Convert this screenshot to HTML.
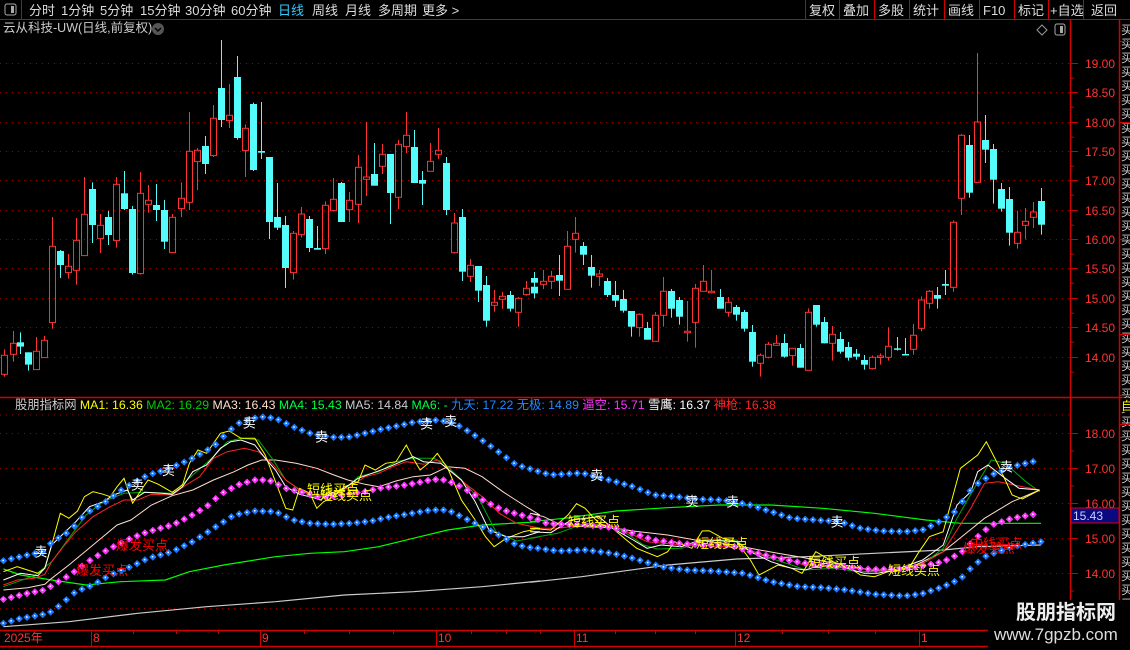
<!DOCTYPE html>
<html><head><meta charset="utf-8"><style>
html,body{margin:0;padding:0;background:#000;width:1130px;height:650px;overflow:hidden;font-family:"Liberation Sans","Noto Sans CJK SC",sans-serif}
#c{position:absolute;left:0;top:0}
.t{position:absolute;white-space:nowrap;font-size:13px;line-height:15px}
</style></head><body>
<svg id="c" width="1130" height="650" xmlns="http://www.w3.org/2000/svg"></svg>
<div class="t" style="left:3px;top:21px;color:#ccc;font-size:12.5px">云从科技-UW(日线,前复权)</div>
<div class="t" style="left:15px;top:398px;font-size:12.3px;color:#ccc">股朋指标网 <span style="color:#ff0">MA1: 16.36</span> <span style="color:#0c0">MA2: 16.29</span> <span style="color:#fdc">MA3: 16.43</span> <span style="color:#0f4">MA4: 15.43</span> <span style="color:#ccc">MA5: 14.84</span> <span style="color:#0f4">MA6: -</span> <span style="color:#28f">九天: 17.22</span> <span style="color:#28f">无极: 14.89</span> <span style="color:#f3f">逼空: 15.71</span> <span style="color:#fff">雪鹰: 16.37</span> <span style="color:#f22">神枪: 16.38</span></div>
<div style="position:absolute;left:988px;top:600px;width:142px;height:50px;background:#000"></div>
<div class="t" style="left:1016px;top:602px;font-size:20px;line-height:22px;color:#eee;font-weight:bold">股朋指标网</div>
<div class="t" style="left:994px;top:625px;font-size:17px;line-height:20px;color:#ddd">www.7gpzb.com</div>
<script>
var s=document.getElementById('c'),h='';
function L(x1,y1,x2,y2,c,w,d){h+='<line x1="'+x1+'" y1="'+y1+'" x2="'+x2+'" y2="'+y2+'" stroke="'+c+'" stroke-width="'+(w||1)+'"'+(d?' stroke-dasharray="'+d+'"':'')+'/>';}
function T(x,y,t,c,fs,a){h+='<text x="'+x+'" y="'+y+'" fill="'+c+'" font-size="'+(fs||13)+'" font-family="Liberation Sans,Noto Sans CJK SC,sans-serif"'+(a?' '+a:'')+'>'+t+'</text>';}
var R='#d00000';
// toolbar
L(0,19.5,1130,19.5,R);L(21.5,0,21.5,19,R);
h+='<rect x="5" y="4" width="11" height="11" rx="2" fill="none" stroke="#aaa"/><rect x="11" y="6" width="3" height="7" fill="#aaa"/>';
[[29,'分时'],[61,'1分钟'],[100,'5分钟'],[140,'15分钟'],[185,'30分钟'],[231,'60分钟'],[278,'日线'],[312,'周线'],[345,'月线'],[378,'多周期'],[422,'更多 &gt;']].forEach(function(p){T(p[0],15,p[1],p[1]=='日线'?'#3cf':'#ddd',13);});
var bx=[805,839,874,909,944,979,1014,1048,1083],bl=['复权','叠加','多股','统计','画线','F10','标记','+自选','返回'];
bx.forEach(function(x,i){L(x+.5,0,x+.5,19,R);T(x+(i==7?2:(i==8?8:4)),15,bl[i],'#ddd',13);});
h+='<circle cx="158" cy="29" r="6" fill="#555"/><path d="M155 28l3 3 3-3" stroke="#000" stroke-width="1.5" fill="none"/>';
h+='<path d="M1042 25l5 5-5 5-5-5z" fill="none" stroke="#999"/><rect x="1055" y="24" width="10" height="11" rx="2" fill="none" stroke="#aaa"/><rect x="1060" y="26" width="3" height="7" fill="#aaa"/>';
// frame
L(1070.5,19,1070.5,646,R,1.5);L(1119.5,19,1119.5,646,R,1.5);L(0,397.5,1130,397.5,R,1.5);L(0,630.5,1070,630.5,R,1.5);L(0,646.5,1130,646.5,R,1.5);
// right strip
for(var y=22;y<645;y+=14){T(1121,y+12,'买','#ccc',12);}
[41,122,239,334,395,424,437].forEach(function(y){L(1120,y+.5,1130,y+.5,R);});
h+='<rect x="1121" y="398" width="9" height="14" fill="#000"/>';T(1121,410,'自','#ff0',12);
// upper grid
var up=[[19,63],[18.5,92],[18,122],[17.5,151],[17,180],[16.5,210],[16,239],[15.5,268],[15,298],[14.5,327],[14,357]];
up.forEach(function(p){L(0,p[1]+.5,1070,p[1]+.5,'#a00000',1,'1 5');L(1070,p[1]+.5,1078,p[1]+.5,R);T(1085,p[1]+5,p[0].toFixed(2),'#f33',12);L(1070,p[1]+15.2,1074,p[1]+15.2,R);});
var lo=[[18,433],[17,468],[16,503],[15,538],[14,573]];
lo.forEach(function(p){L(0,p[1]+.5,1070,p[1]+.5,'#a00000',1,'1 5');L(1070,p[1]+.5,1078,p[1]+.5,R);T(1085,p[1]+5,p[0].toFixed(2),'#f33',12);L(1070,p[1]+18,1074,p[1]+18,R);});
L(0,415,1070,415,'#a00000',1,'1 5');L(0,608.5,1070,608.5,'#a00000',1,'1 5');
// candles
var A=[[13,1,946,1003,928,1010],[37,1,910,943,873,965],[60,0,907,920,877,942],[84,0,937,974,937,992],[108,1,934,989,891,990],[131,1,901,953,888,953],[155,1,619,848,531,866],[178,0,633,675,630,714],[202,1,679,698,642,716],[226,1,601,691,534,734],[249,1,523,647,411,647],[273,0,447,555,427,609],[297,1,556,596,522,639],[320,0,531,585,513,615],[344,1,433,602,411,623],[368,0,460,507,393,510],[391,0,507,699,498,704],[415,1,460,701,396,704],[439,1,481,493,435,518],[462,0,495,510,432,543],[486,0,510,605,480,627],[510,1,532,638,522,638],[536,1,475,506,427,531],[560,1,334,487,216,510],[584,1,331,365,324,450],[607,0,318,372,288,402],[631,1,235,347,195,351],[655,0,144,240,0,261],[679,1,226,242,132,264],[702,0,111,294,48,299],[726,1,265,332,253,411],[750,0,192,390,188,393],[773,0,333,338,186,357],[797,0,351,546,351,597],[820,0,531,563,429,570],[844,0,555,684,528,744],[868,1,580,698,573,719],[891,1,522,584,501,593],[915,0,537,624,528,636],[939,0,624,629,558,629],[962,1,496,626,484,642],[986,1,478,512,414,515],[1010,0,429,546,426,546],[1033,1,481,509,456,546],[1060,1,382,493,345,549],[1084,1,411,418,246,468],[1107,0,402,437,309,437],[1131,1,343,379,312,402],[1155,0,342,459,342,552],[1179,1,313,472,300,507],[1202,1,286,320,216,339],[1226,0,321,429,270,429],[1249,0,420,431,393,495],[1273,1,364,394,309,394],[1297,1,331,343,264,357],[1320,0,369,510,351,525],[1344,1,549,638,519,641],[1368,0,531,695,507,723],[1391,1,676,709,657,726],[1415,0,678,752,678,786],[1439,0,735,842,708,860],[1462,1,787,796,750,815],[1486,1,769,778,756,806],[1509,0,765,806,753,815],[1533,1,775,817,771,860],[1557,1,745,764,723,767],[1581,0,740,760,730,775]];
var B=[[13,0,714,728,696,764],[39,1,724,733,690,747],[63,1,709,724,693,747],[87,0,705,722,645,768],[110,1,619,748,573,748],[134,1,580,598,531,638],[158,0,618,644,606,675],[181,0,681,707,645,743],[205,1,702,709,690,738],[229,0,723,765,714,771],[253,0,765,782,723,801],[276,0,777,812,750,818],[300,0,813,860,813,890],[323,1,823,863,820,890],[347,0,864,899,846,899],[371,1,826,904,816,904],[395,1,754,826,711,860],[418,0,753,806,747,833],[442,0,780,830,771,854],[465,1,874,877,783,905],[489,1,745,847,732,923],[513,1,724,754,675,754],[537,1,754,758,690,760],[563,0,771,806,747,806],[587,1,787,817,771,830],[610,0,801,824,795,842],[634,0,816,866,810,875],[658,0,876,965,855,980],[681,1,946,970,940,1010],[705,1,913,952,906,955],[729,1,910,916,885,916],[752,0,909,950,882,953],[776,1,925,947,925,977],[800,0,924,983,912,983],[823,1,817,991,805,991],[847,0,795,854,795,860],[871,0,846,910,831,910],[895,1,883,910,858,962],[918,0,897,935,876,941],[942,0,921,953,906,962],[966,0,941,950,927,959],[989,0,960,974,945,989],[1013,1,952,986,946,989],[1037,1,948,952,940,974],[1060,1,919,952,862,962],[1087,0,925,929,891,932],[1110,0,942,945,894,946],[1134,1,886,928,852,944],[1158,1,780,865,769,874],[1181,1,754,790,750,806],[1205,0,765,776,741,806],[1229,0,732,737,690,765],[1253,1,547,742,541,755],[1276,1,286,475,282,525],[1300,0,315,458,285,473],[1323,1,246,427,39,427],[1347,0,300,329,225,369],[1371,0,327,419,312,491],[1394,0,447,506,429,515],[1418,0,477,578,441,617],[1442,1,577,610,512,626],[1465,1,544,556,504,598],[1489,1,516,532,486,564],[1513,0,483,554,444,584]];
function cd(c,ox){var x=Math.round(ox+c[0]/2.96)+.5,bt=40+c[2]/3,bb=40+c[3]/3,wh=40+c[4]/3,wl=40+c[5]/3;
 if(bb-bt<1.5)bb=bt+1.5;
 if(c[1]){L(x,wh,x,bt,'#ff3232');L(x,bb,x,wl,'#ff3232');h+='<rect x="'+(x-3)+'" y="'+bt.toFixed(1)+'" width="6" height="'+(bb-bt).toFixed(1)+'" fill="none" stroke="#ff3232"/>';}
 else{L(x,wh,x,wl,'#54fcfc');h+='<rect x="'+(x-3.5)+'" y="'+bt.toFixed(1)+'" width="7" height="'+(bb-bt).toFixed(1)+'" fill="#54fcfc"/>';}}
A.forEach(function(c){cd(c,0);});B.forEach(function(c){cd(c,530);});
// lower panel
var F=2.904;
function pts(a,b){var r=[];a.forEach(function(p){r.push([p[0]/F,405+p[1]/3]);});b.forEach(function(p){r.push([530+p[0]/F,405+p[1]/3]);});return r;}
function pl(p,c,w){h+='<polyline fill="none" stroke="'+c+'" stroke-width="'+(w||1)+'" points="'+p.map(function(q){return q[0].toFixed(1)+','+q[1].toFixed(1);}).join(' ')+'"/>';}
function dots(p,c){var step=7.86,out=[];out.push(p[0]);for(var i=1;i<p.length;i++){var dx=p[i][0]-p[i-1][0],dy=p[i][1]-p[i-1][1];var x0=p[i-1][0];
 var nx=out[out.length-1][0]+step; while(nx<=p[i][0]){var t=(nx-x0)/dx;out.push([nx,p[i-1][1]+dy*t]);nx+=step;}}
 out.forEach(function(q){h+='<path d="M'+q[0].toFixed(1)+' '+(q[1]-3.7).toFixed(1)+'l3.7 3.7-3.7 3.7-3.7-3.7z" fill="'+c+'"/><rect x="'+(q[0]-1).toFixed(1)+'" y="'+(q[1]-1).toFixed(1)+'" width="1.5" height="1.5" fill="#fff"/>';});}
var gray=pts([[10,665],[200,650],[400,625],[600,605],[800,590],[1000,570],[1200,560],[1400,545],[1568,528]],[[0,532],[150,515],[400,480],[600,462],[800,455],[1000,445],[1200,435],[1300,425],[1484,420]]);
pl(gray,'#ccc',1.2);
var grn=pts([[10,492],[60,510],[150,525],[250,540],[350,530],[480,525],[550,500],[650,480],[800,455],[900,445],[1000,440],[1100,425],[1200,400],[1300,375],[1400,360],[1568,350]],[[0,350],[100,340],[250,318],[400,308],[550,300],[700,300],[850,310],[1000,325],[1150,345],[1250,355],[1484,355]]);
pl(grn,'#0f0',1.2);
var beige=pts([[10,555],[80,548],[130,538],[150,520],[200,480],[270,420],[340,360],[380,345],[440,300],[500,272],[560,255],[620,225],[680,200],[720,180],[760,165],[800,165],[860,175],[920,190],[970,210],[1010,225],[1060,238],[1100,245],[1150,228],[1200,215],[1250,210],[1300,185],[1350,190],[1400,215],[1460,260],[1520,300],[1568,330]],[[0,325],[40,335],[80,355],[160,365],[240,368],[300,378],[400,390],[480,405],[560,415],[640,430],[720,445],[780,455],[860,470],[940,485],[1000,497],[1060,500],[1120,480],[1200,440],[1260,390],[1320,340],[1400,290],[1480,255]]);
pl(beige,'#fdc');
var bu=pts([[10,467],[80,450],[128,440],[150,412],[200,380],[250,325],[300,295],[360,250],[430,210],[480,195],[550,165],[620,125],[665,78],[700,50],[755,35],[800,40],[850,65],[900,85],[960,97],[1010,97],[1060,85],[1110,72],[1160,62],[1200,52],[1270,45],[1320,55],[1370,85],[1420,120],[1460,150],[1500,180],[1550,195]],[[10,195],[60,210],[130,205],[155,205],[230,225],[300,245],[360,270],[420,275],[500,283],[560,285],[640,300],[700,320],[760,340],[830,345],[900,350],[960,370],[1020,378],[1090,380],[1140,375],[1180,355],[1230,325],[1280,255],[1300,236],[1340,210],[1400,185],[1480,165]]);
var blo=pts([[10,655],[60,640],[120,630],[150,620],[175,600],[220,560],[270,540],[320,510],[380,485],[430,460],[500,440],[560,410],[620,370],[680,330],[740,318],[800,320],[850,345],[900,355],[960,358],[1020,355],[1080,348],[1120,338],[1180,328],[1250,315],[1300,315],[1350,340],[1400,365],[1440,385],[1500,420],[1550,430]],[[10,428],[80,438],[160,435],[240,445],[300,460],[380,485],[450,495],[530,498],[620,505],[700,530],[780,545],[850,548],[920,555],[1000,568],[1090,573],[1140,566],[1200,545],[1250,522],[1280,490],[1320,455],[1400,425],[1485,410]]);
var mg=pts([[10,583],[80,565],[130,555],[175,527],[200,512],[270,460],[320,430],[380,400],[430,380],[500,360],[550,335],[600,305],[640,268],[690,240],[740,225],[780,225],[830,250],[870,260],[920,275],[960,275],[1000,268],[1060,260],[1100,250],[1180,240],[1250,225],[1280,222],[1320,235],[1360,258],[1410,290],[1460,315],[1530,335],[1568,345]],[[10,350],[80,358],[170,360],[240,368],[300,385],[360,405],[430,415],[500,420],[580,420],[640,440],[700,455],[760,468],[830,480],[920,487],[990,493],[1070,493],[1130,485],[1200,470],[1250,445],[1300,395],[1340,360],[1400,340],[1480,325]]);
var yl=pts([[10,500],[50,485],[80,495],[110,505],[130,490],[150,420],[175,325],[200,340],[225,318],[245,275],[270,260],[300,268],[320,275],[340,245],[360,220],[385,295],[410,255],[430,225],[460,238],[500,262],[530,240],[550,175],[575,135],[600,145],[640,85],[665,78],[700,100],[740,100],[770,150],[800,230],[830,310],[850,315],[870,250],[900,265],[920,310],[940,290],[960,280],[1000,245],[1040,230],[1060,180],[1090,195],[1120,175],[1150,170],[1180,120],[1200,160],[1220,195],[1250,170],[1270,145],[1300,190],[1340,285],[1380,345],[1410,395],[1435,425],[1470,400],[1520,380],[1568,370]],[[0,370],[60,375],[110,330],[135,296],[160,310],[200,355],[240,370],[280,405],[310,430],[370,455],[400,440],[420,410],[470,430],[500,378],[520,377],[560,400],[600,410],[640,465],[665,510],[720,480],[760,490],[790,505],[830,440],[880,470],[930,490],[960,510],[1000,515],[1040,500],[1100,490],[1130,440],[1160,395],[1200,380],[1250,190],[1300,150],[1325,110],[1360,180],[1400,270],[1430,282],[1480,255]]);
var gn=pts([[10,545],[100,512],[150,470],[200,400],[250,330],[300,290],[360,265],[420,262],[500,265],[560,210],[620,155],[660,110],[700,100],[750,105],[790,160],[830,225],[870,255],[910,275],[960,270],[1000,255],[1040,215],[1100,200],[1150,170],[1200,160],[1260,160],[1290,175],[1340,225],[1390,280],[1440,380],[1500,408],[1568,395]],[[0,400],[80,385],[160,355],[220,360],[280,385],[330,420],[370,432],[440,430],[520,405],[600,405],[640,440],[700,460],[760,480],[800,495],[880,490],[960,500],[1040,498],[1100,492],[1150,470],[1200,430],[1240,340],[1290,250],[1340,165],[1380,175],[1440,230],[1480,260]]);
var rd=pts([[10,540],[50,525],[100,520],[130,508],[150,470],[180,430],[220,380],[270,335],[320,305],[360,285],[400,285],[440,268],[500,270],[540,240],[580,215],[620,160],[660,140],[710,130],[750,140],[790,175],[830,225],[880,260],[920,275],[960,265],[1010,250],[1060,215],[1100,205],[1140,185],[1180,170],[1230,178],[1270,165],[1310,200],[1350,235],[1400,275],[1450,325],[1500,355],[1568,370]],[[0,370],[80,370],[160,360],[230,360],[280,380],[340,410],[420,418],[480,420],[560,425],[620,430],[680,450],[740,460],[790,478],[860,485],[940,490],[1000,495],[1060,495],[1100,490],[1150,470],[1200,440],[1240,375],[1280,310],[1320,235],[1360,230],[1420,243],[1480,255]]);
var wt=pts([[10,525],[60,505],[110,512],[130,490],[150,420],[180,390],[220,350],[260,305],[300,290],[330,270],[370,255],[385,285],[420,262],[470,265],[500,268],[530,245],[560,200],[600,180],[640,130],[670,110],[700,105],[740,120],[770,160],[800,195],[830,245],[870,268],[910,278],[930,285],[960,265],[1000,250],[1040,220],[1080,205],[1120,190],[1160,172],[1200,155],[1230,170],[1280,175],[1340,225],[1380,290],[1420,375],[1470,395],[1520,395],[1568,380]],[[0,380],[60,383],[120,345],[200,335],[240,370],[300,405],[340,430],[380,420],[440,425],[480,410],[520,405],[600,410],[640,440],[700,470],[760,490],[800,495],[860,475],[920,490],[970,505],[1010,505],[1060,495],[1100,480],[1140,465],[1200,420],[1240,300],[1280,260],[1300,200],[1330,180],[1380,220],[1420,250],[1480,255]]);
pl(gn,'#0a0');pl(rd,'#f22');pl(yl,'#ff0');pl(wt,'#fff');
dots(mg,'#f3f');dots(bu,'#1a78ff');dots(blo,'#1a78ff');
// labels
[[120,440],[400,238],[490,195],[725,52],[935,95],[1240,55],[1310,48]].forEach(function(p){T(p[0]/F-7,405+p[1]/3+5,'卖','#fff',13);});
[[195,210],[472,288],[590,290],[893,350],[1385,185]].forEach(function(p){T(530+p[0]/F-7,405+p[1]/3+5,'卖','#fff',13);});
T(116,550,'爆发买点','#f00',13);T(76,575,'爆发买点','#f00',13);
T(963,553,'爆发买点','#f00',13);T(970,548,'中线买点','#f00',13);
[[307,494],[320,500],[568,526],[696,548],[808,567],[888,575]].forEach(function(p){T(p[0],p[1],'短线买点','#ff0',13);});
// 15.43 box
h+='<rect x="1071" y="508" width="48" height="15" fill="#0a0a80" stroke="#d00" stroke-width="1"/>';T(1073,520,'15.43','#ccf',12);
// dates
T(4,642,'2025年','#f33',12);[[91,'8'],[260,'9'],[436,'10'],[574,'11'],[735,'12'],[919,'1']].forEach(function(p){L(p[0]+.5,631,p[0]+.5,646,R);T(p[0]+2,642,p[1],'#f33',12);});
[133,176,218,304,349,393,471,506,540,615,655,695,782,828,875].forEach(function(x){L(x+.5,631,x+.5,634,R);});
s.innerHTML=h;
</script>
</body></html>
